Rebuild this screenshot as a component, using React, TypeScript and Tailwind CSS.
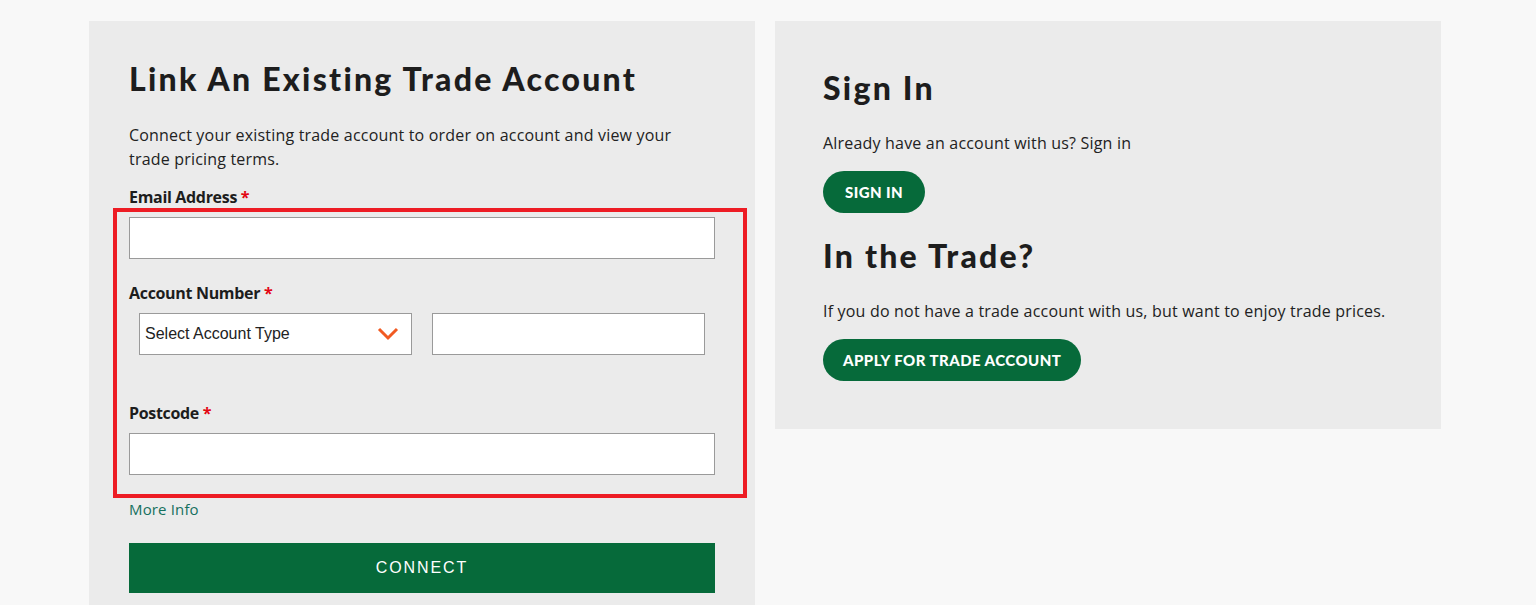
import { useState } from "react";

const heading = "font-['Lato',sans-serif] font-black text-[32px] leading-[40px] tracking-[0.07em] text-[#1d1d1d]";
const body = "font-['Open_Sans',sans-serif] text-[16px] leading-6 tracking-[0.012em] text-[#222]";
const label = "font-['Open_Sans',sans-serif] font-bold text-[16px] leading-6 tracking-[-0.02em] text-[#1d1d1d]";
const field = "block h-[42px] border border-[#9a9a9a] bg-white px-2 outline-none";
const pill =
  "inline-flex h-[42px] items-center rounded-full bg-[#066a3a] px-5 font-['Lato',sans-serif] font-black text-[15px] uppercase tracking-[0.03em] text-white";

function Label({ children }: { children: string }) {
  return (
    <label className={label}>
      {children} <span className="text-[#e30613]">*</span>
    </label>
  );
}

export default function App() {
  const [type, setType] = useState("");

  return (
    <div className="min-h-screen bg-[#f8f8f8] pl-[89px] pt-[21px]">
      <div className="flex items-start gap-5">
        {/* link existing account */}
        <section className="relative h-[584px] w-[666px] shrink-0 bg-[#ebebeb] px-10 pt-[38px]">
          <h1 className={heading}>Link An Existing Trade Account</h1>
          <p className={`${body} mt-6`}>
            Connect your existing trade account to order on account and view your trade pricing terms.
          </p>

          <div className="mt-[14px]">
            <Label>Email Address</Label>
          </div>
          <input type="email" className={`${field} mt-2 w-full`} />

          <div className="mt-[22px]">
            <Label>Account Number</Label>
          </div>
          <div className="mt-2 flex gap-5 px-[10px]">
            <div className="relative w-[273px] shrink-0">
              <select
                value={type}
                onChange={(e) => setType(e.target.value)}
                className="h-[42px] w-full appearance-none border border-[#9a9a9a] bg-white pl-[5px] font-['Liberation_Sans',Arial,sans-serif] text-[16px] text-[#222] outline-none"
              >
                <option value="">Select Account Type</option>
                <option value="cash">Cash</option>
                <option value="credit">Credit</option>
              </select>
              <svg
                className="pointer-events-none absolute right-[13px] top-[14px]"
                width="22"
                height="14"
                viewBox="0 0 22 14"
                fill="none"
              >
                <path d="M2 2l9 9 9-9" stroke="#f15a22" strokeWidth="3" />
              </svg>
            </div>
            <input type="text" className={`${field} w-[273px] shrink-0`} />
          </div>

          <div className="mt-[46px]">
            <Label>Postcode</Label>
          </div>
          <input type="text" className={`${field} mt-2 w-full`} />

          <a href="#" className="mt-[22px] block font-['Open_Sans',sans-serif] text-[15px] leading-6 tracking-[0.01em] text-[#16705e]">
            More Info
          </a>

          <button className="mt-[22px] h-[50px] w-full bg-[#066a3a] font-['Liberation_Sans',Arial,sans-serif] text-[16px] tracking-[0.12em] text-white">
            CONNECT
          </button>

          {/* highlight overlay */}
          <div className="pointer-events-none absolute left-6 top-[187px] h-[290px] w-[634px] border-4 border-[#ed1c24]" />
        </section>

        {/* sign in / trade */}
        <section className="w-[666px] shrink-0 bg-[#ebebeb] px-12 pb-12 pt-[47px]">
          <h2 className={heading}>Sign In</h2>
          <p className={`${body} mt-[23px]`}>Already have an account with us? Sign in</p>
          <button className={`${pill} mt-4 px-[22px]`}>Sign In</button>

          <h2 className={`${heading} mt-[23px]`}>In the Trade?</h2>
          <p className={`${body} mt-[23px]`}>
            If you do not have a trade account with us, but want to enjoy trade prices.
          </p>
          <button className={`${pill} mt-4`}>Apply For Trade Account</button>
        </section>
      </div>
    </div>
  );
}
